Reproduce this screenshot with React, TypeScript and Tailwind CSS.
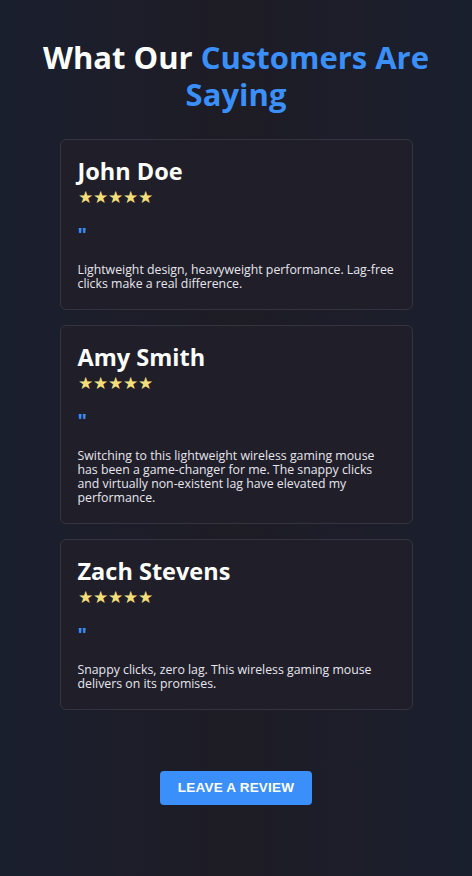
const reviews = [
  {
    name: 'John Doe',
    text: 'Lightweight design, heavyweight performance. Lag-free clicks make a real difference.',
  },
  {
    name: 'Amy Smith',
    text: 'Switching to this lightweight wireless gaming mouse has been a game-changer for me. The snappy clicks and virtually non-existent lag have elevated my performance.',
  },
  {
    name: 'Zach Stevens',
    text: 'Snappy clicks, zero lag. This wireless gaming mouse delivers on its promises.',
  },
]

function ReviewCard({ name, text }: { name: string; text: string }) {
  return (
    <div className="rounded-md border border-[#34333e] bg-[#201f29] px-[17px] pt-[17px] pb-[18px]">
      <h3 className="text-[23.5px] leading-[28px] font-bold text-white">{name}</h3>
      <div className="mt-[3px] text-[17px] leading-[18px] text-[#f5de7a]">★★★★★</div>
      <div className="mt-[17px] h-[40px] text-[20px] leading-[24px] font-bold text-[#3a8ffa]">"</div>
      <p className="text-[12.3px] leading-[14px] text-[#e6e6ee]">{text}</p>
    </div>
  )
}

export default function App() {
  return (
    <div
      className="min-h-[876px] bg-gradient-to-r from-[#1a1f2e] via-[#1e1c25] to-[#1a1f2e] pt-[39px] pb-[72px]"
      style={{ fontFamily: '"Open Sans", "Noto Sans", sans-serif' }}
    >
      <h2 className="px-6 text-center text-[31px] leading-[37px] font-bold text-white">
        What Our <span className="text-[#3a8ffa]">Customers Are Saying</span>
      </h2>

      <div className="mx-auto mt-[26px] flex w-[353px] flex-col gap-[15px]">
        {reviews.map((r) => (
          <ReviewCard key={r.name} name={r.name} text={r.text} />
        ))}
      </div>

      <div className="mt-[61px] flex justify-center">
        <button
          className="h-[34px] w-[152px] rounded-[4px] bg-[#3a8ffa] text-[13.5px] font-bold tracking-[0.2px] text-white uppercase"
          style={{ fontFamily: '"Liberation Sans", Arial, sans-serif' }}
        >
          Leave a Review
        </button>
      </div>
    </div>
  )
}
